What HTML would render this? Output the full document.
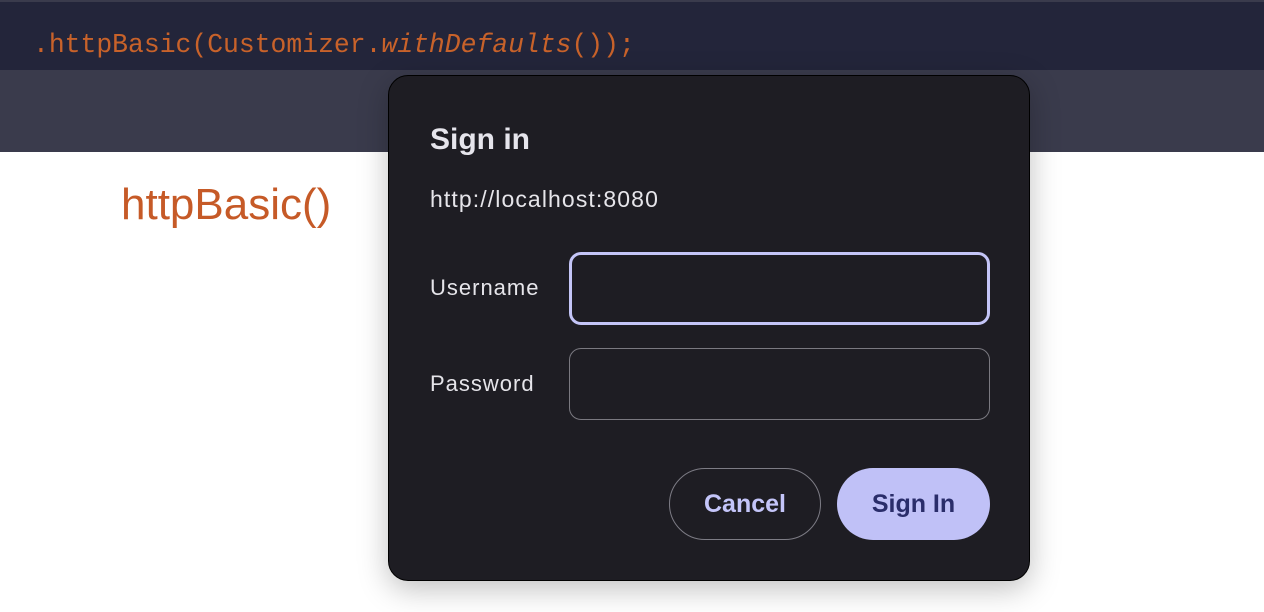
<!DOCTYPE html>
<html><head><style>
*{margin:0;padding:0;box-sizing:border-box}
body{width:1264px;height:612px;overflow:hidden;background:#fff;position:relative;font-family:"Liberation Sans",sans-serif}
.top{position:absolute;left:0;top:0;width:1264px;height:2px;background:#3a3b4c}
.code{position:absolute;left:0;top:2px;width:1264px;height:68px;background:#23253a}
.band{position:absolute;left:0;top:70px;width:1264px;height:82px;background:#3a3b4c}
.ct{position:absolute;left:33px;top:30px;font-family:"Liberation Mono",monospace;font-size:26.4px;line-height:30px;color:#c8622a;white-space:nowrap}
.h{position:absolute;left:121px;top:180px;font-size:44px;color:#c65a27}
.dlg{position:absolute;left:388px;top:75px;width:642px;height:506px;background:#1e1d23;border-radius:20px;box-shadow:0 8px 30px rgba(0,0,0,.25);border:1px solid #000;color:#e6e5ea}
.t{position:absolute;left:41px;top:47px;font-size:30px;font-weight:bold;color:#e6e5ec}
.u{position:absolute;left:41px;top:110px;font-size:23px;letter-spacing:1.1px}
.l{position:absolute;left:41px;font-size:22px;letter-spacing:1px}
.in{position:absolute;left:180px;width:421px;border-radius:12px}
.btn{position:absolute;top:392px;height:72px;border-radius:36px;font-size:25px;font-weight:bold;text-align:center;line-height:70px}
</style></head><body>
<div class="top"></div>
<div class="code"></div>
<div class="band"></div>
<div class="ct">.httpBasic(Customizer.<i>withDefaults</i>());</div>
<div class="h">httpBasic()</div>
<div class="dlg">
<div class="t">Sign in</div>
<div class="u">http://localhost:8080</div>
<div class="l" style="top:199px">Username</div>
<div class="in" style="top:176px;height:73px;border:3px solid #c4c5f7"></div>
<div class="l" style="top:295px">Password</div>
<div class="in" style="top:272px;height:72px;border:1.5px solid #7a7980"></div>
<div class="btn" style="left:280px;width:152px;border:1.5px solid #7d7c85;color:#c4c5f9">Cancel</div>
<div class="btn" style="left:448px;width:153px;background:#c0c1f7;color:#2a2d6a;line-height:72px">Sign In</div>
</div>
</body></html>
